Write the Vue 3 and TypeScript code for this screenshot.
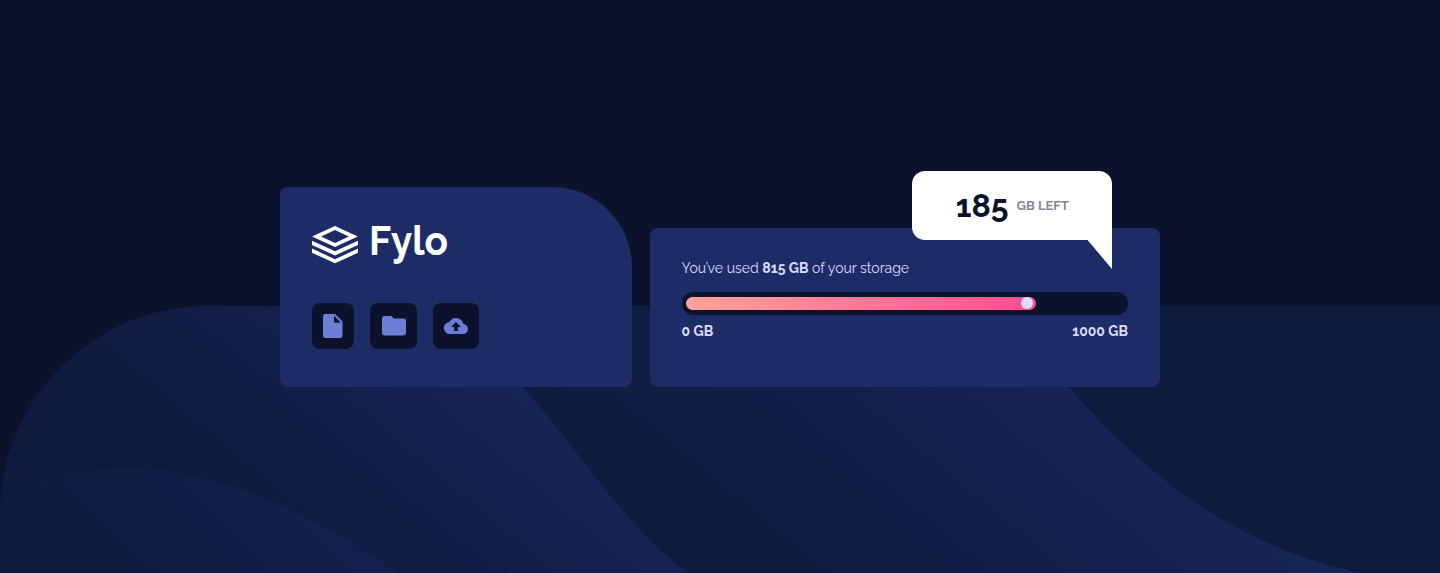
<script setup lang="ts">
interface Storage {
  used: number
  total: number
}

const storage: Storage = { used: 815, total: 1000 }
const remaining = storage.total - storage.used
const fillWidth = '350px'
</script>

<template>
  <main class="page">
    <svg class="hills" viewBox="0 0 1440 267" aria-hidden="true">
      <defs>
        <linearGradient id="hill-a" gradientUnits="userSpaceOnUse" x1="200" y1="190" x2="412" y2="-62">
          <stop offset="0" stop-color="#0e1b3c" />
          <stop offset="0.5" stop-color="#131e4a" />
          <stop offset="1" stop-color="#18265a" />
        </linearGradient>
        <linearGradient id="hill-b" gradientUnits="userSpaceOnUse" x1="620" y1="190" x2="905" y2="-150">
          <stop offset="0" stop-color="#0e1b3c" />
          <stop offset="0.5" stop-color="#131e4a" />
          <stop offset="1" stop-color="#18265a" />
        </linearGradient>
        <linearGradient id="hill-c" gradientUnits="userSpaceOnUse" x1="30" y1="240" x2="205" y2="65">
          <stop offset="0" stop-color="#0e1b3c" />
          <stop offset="1" stop-color="#141f4e" />
        </linearGradient>
      </defs>
      <path d="M0 267V209C0 94 93 0 208 0H1440V267Z" fill="#0e1b3c" />
      <path d="M500 0H980C1015 30 1039 45 1069 81C1150 175 1240 242 1362 267H600Z" fill="url(#hill-b)" />
      <path d="M0 267V209C0 94 93 0 208 0H410C455 18 488 42 523 81C580 146 625 220 688 267Z" fill="url(#hill-a)" />
      <path d="M0 267V207C25 176 75 163 128 163C220 163 308 205 398 267Z" fill="url(#hill-c)" />
    </svg>

    <div class="dashboard">
      <section class="card brand-card">
        <svg class="logo" width="136" height="42" viewBox="0 0 136 42" role="img" aria-label="Fylo">
          <path d="M23 4.1L45.8 14.6L23 25.1L0 14.6ZM23 8.1L9.1 14.6L23 21L36.8 14.6Z" fill="#fff" fill-rule="evenodd" />
          <path d="M0 18.8L23 29.3L46 18.8V23L23 33.5L0 23ZM0 26.6L23 37.2L46 26.6V30.8L23 41.3L0 30.8Z" fill="#fff" />
          <text x="57" y="33" textLength="79" lengthAdjust="spacingAndGlyphs" class="logo-name">Fylo</text>
        </svg>
        <nav class="actions">
          <button class="action" aria-label="Documents">
            <svg width="20" height="24" viewBox="0 0 20 24"><path fill-rule="evenodd" d="M2.4 0H12L19.5 7.3V21.7Q19.5 24 17.1 24H2.4Q0 24 0 21.7V2.3Q0 0 2.4 0ZM11 1.8V8.7H17.9Z" /></svg>
          </button>
          <button class="action" aria-label="Folders">
            <svg width="24" height="20" viewBox="0 0 24 20"><path d="M2.4 0H9.2L12 2.5H21.6Q24 2.5 24 4.9V17Q24 19.4 21.6 19.4H2.4Q0 19.4 0 17V2.4Q0 0 2.4 0Z" /></svg>
          </button>
          <button class="action" aria-label="Upload">
            <svg width="24" height="16" viewBox="0 0 24 16"><path fill-rule="evenodd" d="M19.35 6.04A7.49 7.49 0 0 0 12 0C9.11 0 6.6 1.64 5.35 4.04A5.994 5.994 0 0 0 6 16H19C21.76 16 24 13.76 24 11C24 8.36 21.95 6.22 19.35 6.04ZM14 9V13H10V9H7L12 4L17 9Z" /></svg>
          </button>
        </nav>
      </section>

      <section class="card storage-card">
        <p class="summary">You’ve used <strong>{{ storage.used }} GB</strong> of your storage</p>
        <div class="track">
          <div class="fill" :style="{ width: fillWidth }"><span class="knob"></span></div>
        </div>
        <div class="limits">
          <strong>0 GB</strong>
          <strong>{{ storage.total }} GB</strong>
        </div>
        <aside class="bubble">
          <strong class="amount">{{ remaining }}</strong>
          <span class="unit">GB LEFT</span>
        </aside>
      </section>
    </div>
  </main>
</template>

<style>
body {
  margin: 0;
  background: #0c122c;
}
</style>

<style scoped>
.page {
  position: relative;
  box-sizing: border-box;
  height: 573px;
  overflow: hidden;
  padding-top: 187px;
  background: #0c122c;
  color: #dddbff;
  font-family: Raleway, Lato, "Open Sans", sans-serif;
}
.hills {
  position: absolute;
  left: 0;
  bottom: 0;
  width: 1440px;
  height: 267px;
}
.dashboard {
  position: relative;
  display: flex;
  align-items: flex-end;
  gap: 18px;
  width: 880px;
  height: 200px;
  margin: 0 auto;
}
.card {
  box-sizing: border-box;
  background: #1d2c67;
  border-radius: 8px;
}
.brand-card {
  width: 352px;
  height: 200px;
  padding: 35px 32px;
  border-top-right-radius: 80px;
}
.logo {
  display: block;
  overflow: visible;
}
.logo-name {
  fill: #fff;
  font-size: 41.5px;
  font-weight: 700;
}
.actions {
  display: flex;
  gap: 16px;
  margin-top: 39px;
}
.action {
  display: flex;
  align-items: center;
  justify-content: center;
  height: 46px;
  padding: 0 11px;
  border: 0;
  border-radius: 8px;
  background: #0c122c;
}
.action:nth-child(2) {
  padding: 0 11.5px;
}
.action svg {
  fill: #6b7fd7;
}
.storage-card {
  position: relative;
  width: 510px;
  height: 159px;
  padding: 30px 32px;
}
.summary {
  margin: 0 0 0 -0.4px;
  font-size: 14px;
  line-height: 20px;
  letter-spacing: 0.01px;
}
.track {
  box-sizing: border-box;
  height: 23px;
  margin-top: 14px;
  padding: 5px 4px;
  border-radius: 12px;
  background: #0c122c;
}
.fill {
  display: flex;
  align-items: flex-start;
  justify-content: flex-end;
  box-sizing: border-box;
  height: 13px;
  padding-right: 3px;
  border-radius: 7px;
  background: linear-gradient(90deg, #ffa399, #ff4c94);
}
.knob {
  width: 12px;
  height: 12px;
  border-radius: 50%;
  background: #dddbff;
}
.limits {
  display: flex;
  justify-content: space-between;
  margin: 6px 0 0 -0.4px;
  font-size: 14px;
  line-height: 20px;
}
.bubble {
  position: absolute;
  top: -57px;
  right: 48px;
  box-sizing: border-box;
  display: flex;
  align-items: center;
  justify-content: center;
  gap: 8px;
  width: 200px;
  height: 69px;
  border-radius: 13px 13px 0 13px;
  padding-left: 0.5px;
  background: #fff;
}
.bubble::after {
  content: "";
  position: absolute;
  top: 100%;
  right: 0;
  width: 24.5px;
  height: 29px;
  background: #fff;
  clip-path: polygon(0 0, 100% 0, 100% 100%);
}
.amount {
  color: #0c122c;
  font-size: 32px;
  line-height: 40px;
}
.unit {
  color: #84879a;
  font-size: 13px;
  font-weight: 700;
}
</style>
